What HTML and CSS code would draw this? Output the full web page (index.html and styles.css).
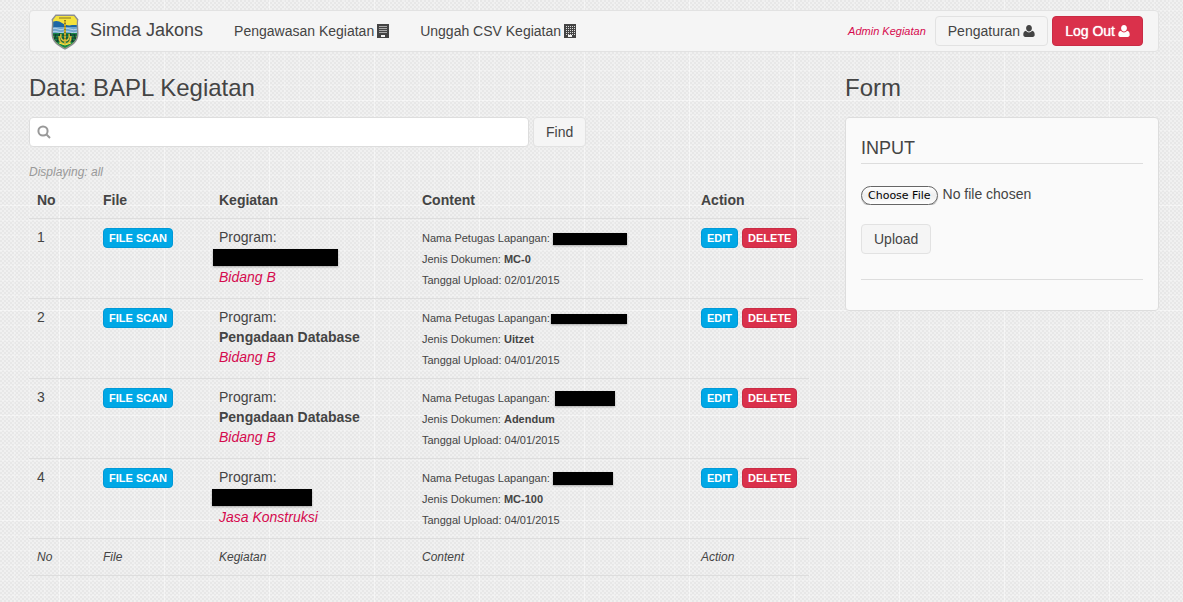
FILE: index.html
```html
<!DOCTYPE html>
<html lang="id">
<head>
<meta charset="utf-8">
<title>Simda Jakons</title>
<link rel="stylesheet" href="styles.css">
</head>
<body>
<svg class="defs" aria-hidden="true">
  <symbol id="user" viewBox="0 0 12 12"><path d="M6 0C7.900 0 8.900 1.400 8.900 3.200S7.700 6.600 6 6.600 3.100 5 3.100 3.200 4.100 0 6 0ZM3 5.800C3.800 6.800 4.800 7.400 6 7.400s2.200-.6 3-1.600c2 .2 2.700 2 2.700 4 0 1.300-.8 2.200-2 2.200H2.300C1.100 12 .3 11.100.3 9.800c0-2 .7-3.800 2.700-4Z" fill="currentColor"/></symbol>
</svg>
<div class="page">
  <nav class="navbar">
    <a class="brand" href="#">
      <svg class="logo" viewBox="0 0 28 36" aria-hidden="true">
        <defs><clipPath id="shield"><path d="M5 2H23L26 6C25.500 9 26 14 26 19C26 27 21 30.500 14 34C7 30.500 2 27 2 19C2 14 2.500 9 2 6Z"/></clipPath></defs>
        <path d="M4.500.5H23.500L27.500 5.500C26.500 8 27.500 14 27.500 19.500C27.500 28 22 31.500 14 35.700C6 31.500.5 28 .5 19.500C.5 14 1.500 8 .5 5.500Z" fill="#8b8d92"/>
        <g clip-path="url(#shield)">
          <path d="M0 0H28V36H0Z" fill="#f4e23c"/>
          <path d="M0 9C4 6 8 7 11 9S18 12 21 11L28 11V20H0Z" fill="#1d66a5"/>
          <path d="M0 13H28V20H0Z" fill="#6fa5cf"/>
          <path d="M1 15Q4 13.500 7 15T13 15T19 15T27 15M1 18Q4 16.500 7 18T13 18T19 18T27 18" fill="none" stroke="#b6d3e7" stroke-width="1"/>
          <path d="M0 19H28V36H0Z" fill="#18874b"/>
          <path d="M2 21H26M2 24H26M4 27H24M5 20L3 27M9 19L6 28M19 19L22 28M23 20L25 27" stroke="#12372c" stroke-width="1"/>
          <path d="M8 4H20" stroke="#80702b" stroke-width="1"/>
        </g>
        <path d="M14 6V29" stroke="#c7a92a" stroke-width="2"/>
        <path d="M14 6V28" stroke="#52551e" stroke-width="1" stroke-dasharray="1 2"/>
        <path d="M8 22C8 28 11 30 14 30S20 28 20 22M10 20C9 24 11 27 14 27S19 24 18 20" fill="none" stroke="#d9bd3c" stroke-width="1.500"/>
        <path d="M8 29L14 31L20 29" fill="none" stroke="#f4e23c" stroke-width="1"/>
      </svg>
      <span class="brand-name">Simda Jakons</span>
    </a>
    <a class="nav-link" href="#">Pengawasan Kegiatan
      <svg class="building" viewBox="0 0 12 14" aria-hidden="true"><path d="M0 0H12V14H0Z" fill="#444"/><path d="M2 2.500H10M2 4.500H10M2 6.500H10M2 8.500H10" stroke="#aaa"/><path d="M4 11H8V13H4Z" fill="#f5f5f5"/></svg>
    </a>
    <a class="nav-link" href="#">Unggah CSV Kegiatan
      <svg class="building" viewBox="0 0 12 14" aria-hidden="true"><path d="M0 0H12V14H0Z" fill="#444"/><path d="M2 2.500H11M2 4.500H11M2 6.500H11M2 8.500H11M2 10.500H11" stroke="#ddd" stroke-dasharray="1 1"/><path d="M4 11H8V13H4Z" fill="#f5f5f5"/></svg>
    </a>
    <div class="nav-actions">
      <em class="role">Admin Kegiatan</em>
      <button class="button" type="button">Pengaturan <svg class="user" aria-hidden="true"><use href="#user"/></svg></button>
      <button class="button danger" type="button">Log Out <svg class="user" aria-hidden="true"><use href="#user"/></svg></button>
    </div>
  </nav>

  <div class="columns">
    <main>
      <h1>Data: BAPL Kegiatan</h1>
      <form class="search">
        <label class="search-box">
          <svg class="search-icon" viewBox="0 0 14 14" aria-hidden="true"><circle cx="6" cy="6" r="4.600" fill="none" stroke="#999" stroke-width="2"/><path d="M9.500 9.500L13 13" stroke="#999" stroke-width="2"/></svg>
          <input type="text" aria-label="Cari kegiatan">
        </label>
        <button class="button" type="button">Find</button>
      </form>
      <p class="status">Displaying: all</p>
      <table>
        <colgroup><col class="c-no"><col class="c-file"><col class="c-kegiatan"><col class="c-content"><col></colgroup>
        <thead><tr><th>No</th><th>File</th><th>Kegiatan</th><th>Content</th><th>Action</th></tr></thead>
        <tfoot><tr><td>No</td><td>File</td><td>Kegiatan</td><td>Content</td><td>Action</td></tr></tfoot>
        <tbody>
          <tr>
            <td>1</td>
            <td><button class="mini" type="button">FILE SCAN</button></td>
            <td><div class="line">Program:</div><div class="line"><span class="bar wide"></span></div><em class="unit">Bidang B</em></td>
            <td class="content"><div>Nama Petugas Lapangan:<span class="bar name-1"></span></div><div>Jenis Dokumen: <b>MC-0</b></div><div>Tanggal Upload: 02/01/2015</div></td>
            <td><div class="actions"><button class="mini" type="button">EDIT</button><button class="mini danger" type="button">DELETE</button></div></td>
          </tr>
          <tr>
            <td>2</td>
            <td><button class="mini" type="button">FILE SCAN</button></td>
            <td><div class="line">Program:</div><div class="line"><b>Pengadaan Database</b></div><em class="unit">Bidang B</em></td>
            <td class="content"><div>Nama Petugas Lapangan:<span class="bar name-2"></span></div><div>Jenis Dokumen: <b>Uitzet</b></div><div>Tanggal Upload: 04/01/2015</div></td>
            <td><div class="actions"><button class="mini" type="button">EDIT</button><button class="mini danger" type="button">DELETE</button></div></td>
          </tr>
          <tr>
            <td>3</td>
            <td><button class="mini" type="button">FILE SCAN</button></td>
            <td><div class="line">Program:</div><div class="line"><b>Pengadaan Database</b></div><em class="unit">Bidang B</em></td>
            <td class="content"><div>Nama Petugas Lapangan:<span class="bar name-3"></span></div><div>Jenis Dokumen: <b>Adendum</b></div><div>Tanggal Upload: 04/01/2015</div></td>
            <td><div class="actions"><button class="mini" type="button">EDIT</button><button class="mini danger" type="button">DELETE</button></div></td>
          </tr>
          <tr>
            <td>4</td>
            <td><button class="mini" type="button">FILE SCAN</button></td>
            <td><div class="line">Program:</div><div class="line"><span class="bar short"></span></div><em class="unit">Jasa Konstruksi</em></td>
            <td class="content"><div>Nama Petugas Lapangan:<span class="bar name-4"></span></div><div>Jenis Dokumen: <b>MC-100</b></div><div>Tanggal Upload: 04/01/2015</div></td>
            <td><div class="actions"><button class="mini" type="button">EDIT</button><button class="mini danger" type="button">DELETE</button></div></td>
          </tr>
        </tbody>
      </table>
    </main>
    <aside>
      <h1>Form</h1>
      <form class="panel">
        <h2 id="input-title">INPUT</h2>
        <input class="file" type="file" aria-labelledby="input-title">
        <button class="button" type="button">Upload</button>
        <hr>
      </form>
    </aside>
  </div>
</div>
</body>
</html>
```
FILE: styles.css
```css
* { box-sizing: border-box; }

body {
  margin: 0;
  color: #444;
  font: 14px/20px "Liberation Sans", Arial, sans-serif;
  background-color: #e8e8e8;
  background-image:
    linear-gradient(90deg, rgba(255,255,255,.3) 1px, transparent 1px),
    linear-gradient(rgba(255,255,255,.3) 1px, transparent 1px),
    linear-gradient(90deg, rgba(255,255,255,.2) 1px, transparent 1px),
    linear-gradient(rgba(255,255,255,.2) 1px, transparent 1px),
    conic-gradient(#f0f0f0 25%, #e7e7e7 0 50%, #f0f0f0 0 75%, #e7e7e7 0);
  background-size: 105px 105px, 105px 105px, 15px 15px, 15px 15px, 4px 4px;
  background-position: 59px 0, 0 100px, 14px 0, 0 10px, 0 0;
}

.defs { display: none; }
.page { padding: 10px 24px 26px 29px; }
h1, h2, p { margin: 0; font-weight: normal; }
button, input { font: inherit; color: inherit; }

.navbar {
  display: flex;
  align-items: center;
  min-height: 42px;
  padding-right: 15px;
  border: 1px solid #e2e2e2;
  border-radius: 4px;
  background: #f5f5f5;
}
.navbar a { color: #444; text-decoration: none; }
.brand { display: flex; align-items: center; gap: 11px; padding: 1px 16px 0 21px; }
.logo { width: 28px; height: 36px; }
.brand-name { padding-bottom: 4px; font-size: 18px; line-height: 30px; }
.nav-link { display: flex; align-items: center; gap: 3px; padding: 0 15px; }
.nav-link + .nav-link { padding-left: 16px; }
.building { width: 12px; height: 14px; }
.nav-actions { display: flex; align-items: center; gap: 4px; margin-left: auto; }
.role { margin-right: 5px; padding-bottom: 1px; color: #d50a4e; font-size: 11px; }

.button {
  display: inline-flex;
  align-items: center;
  gap: 3px;
  height: 30px;
  padding: 0 12px;
  border: 1px solid #e2e2e2;
  border-radius: 4px;
  background: #f5f5f5;
}
.user { width: 12px; height: 12px; }
.button.danger, .mini.danger { background: #da314b; border-color: #c92c45; color: #fff; }
.button.danger { text-shadow: 0 0 1px #fff; }

.columns { display: grid; grid-template-columns: minmax(0, 780fr) minmax(0, 314fr); gap: 36px; padding-top: 21px; }
h1 { margin-bottom: 14px; font-size: 24px; line-height: 30px; }

.search { display: flex; gap: 4px; }
.search-box {
  display: flex;
  align-items: center;
  width: 500px;
  height: 30px;
  padding: 0 7px;
  border: 1px solid #ddd;
  border-radius: 4px;
  background: #fff;
}
.search-icon { width: 14px; height: 14px; }
.search-box input { flex: 1; min-width: 0; border: 0; outline: 0; background: none; }
.status { margin-top: 15px; color: #999; font-size: 12px; font-style: italic; }

table { width: 100%; table-layout: fixed; border-collapse: collapse; }
.c-no { width: 66px; }
.c-file { width: 116px; }
.c-kegiatan { width: 203px; }
.c-content { width: 279px; }
th, td { padding: 8px; text-align: left; vertical-align: top; border-bottom: 1px solid #ddd; }
tfoot { font-size: 12px; font-style: italic; }
.line { display: flex; align-items: center; height: 20px; }
.unit { color: #d50a4e; }
td.content { padding: 9px 8px 7px; font-size: 11px; line-height: 21px; }
.content div:first-child { display: flex; align-items: center; height: 21px; }
.bar { background: #000; box-shadow: 0 1px 2px rgba(0,0,0,.3); }
.wide { width: 125px; height: 17px; margin-left: -6px; }
.short { width: 100px; height: 17px; margin-left: -7px; }
.name-1 { width: 74px; height: 12px; margin-left: 3px; }
.name-2 { width: 76px; height: 10px; margin-left: 1px; }
.name-3 { width: 60px; height: 15px; margin-left: 5px; }
.name-4 { width: 60px; height: 13px; margin-left: 3px; }

.mini {
  display: block;
  height: 20px;
  margin-top: 1px;
  padding: 0 5px;
  border: 1px solid #0099d8;
  border-radius: 4px;
  background: #00a8e6;
  color: #fff;
  font-size: 11px;
  font-weight: bold;
  line-height: 18px;
}
.actions { display: flex; gap: 4px; }

.panel { padding: 15px; border: 1px solid #ddd; border-radius: 4px; background: #fafafa; }
.panel h2 { padding: 4px 0; border-bottom: 1px solid #ddd; font-size: 18px; line-height: 22px; }
.file { display: block; width: 100%; margin: 20px 0 19px; line-height: 20px; }
.file::file-selector-button {
  height: 19px;
  margin: 0 5px 0 0;
  padding: 1px 6px 0;
  border: 1px solid #666;
  border-radius: 10px;
  background: linear-gradient(#fff, #eee 50%, #fff);
  box-shadow: 0 1px 1px rgba(0,0,0,.3);
  color: #000;
  font: 11px/16px "DejaVu Sans", sans-serif;
}
.panel hr { margin: 25px 0 15px; border: 0; border-top: 1px solid #ddd; }
```
